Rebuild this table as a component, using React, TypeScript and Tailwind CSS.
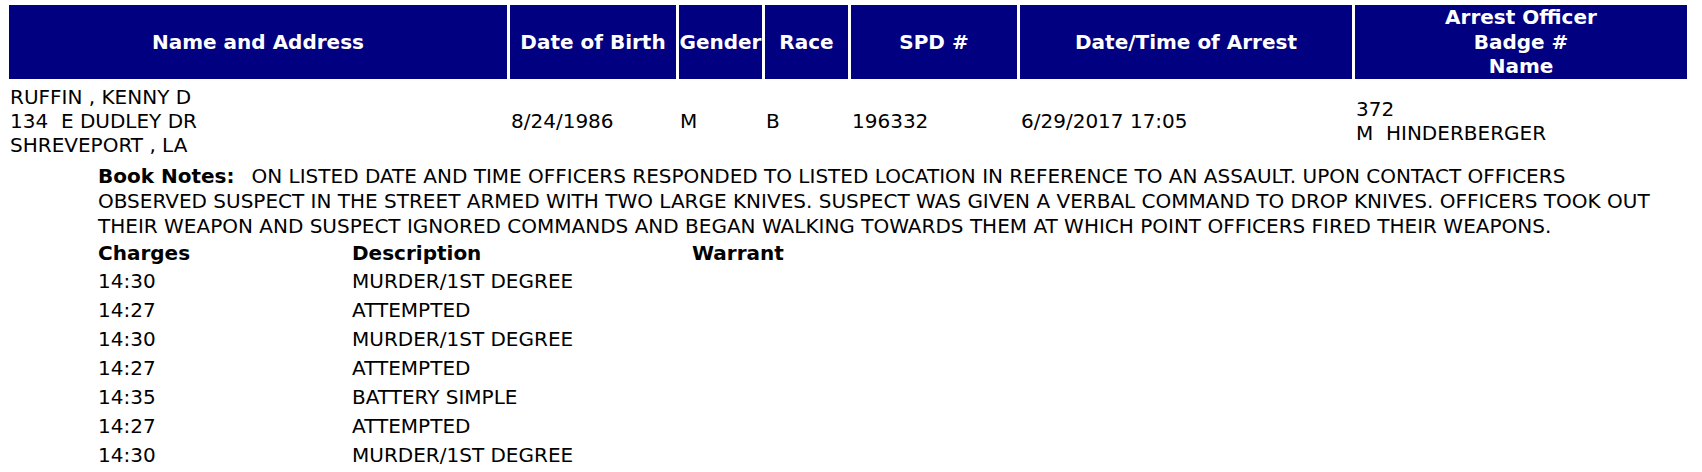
const columns = [
  { label: ['Name and Address'] },
  { label: ['Date of Birth'] },
  { label: ['Gender'] },
  { label: ['Race'] },
  { label: ['SPD #'] },
  { label: ['Date/Time of Arrest'] },
  { label: ['Arrest Officer', 'Badge #', 'Name'] },
]

const charges = [
  { code: '14:30', desc: 'MURDER/1ST DEGREE' },
  { code: '14:27', desc: 'ATTEMPTED' },
  { code: '14:30', desc: 'MURDER/1ST DEGREE' },
  { code: '14:27', desc: 'ATTEMPTED' },
  { code: '14:35', desc: 'BATTERY SIMPLE' },
  { code: '14:27', desc: 'ATTEMPTED' },
  { code: '14:30', desc: 'MURDER/1ST DEGREE' },
]

const notes =
  'ON LISTED DATE AND TIME OFFICERS RESPONDED TO LISTED LOCATION IN REFERENCE TO AN ASSAULT. UPON CONTACT OFFICERS OBSERVED SUSPECT IN THE STREET ARMED WITH TWO LARGE KNIVES. SUSPECT WAS GIVEN A VERBAL COMMAND TO DROP KNIVES. OFFICERS TOOK OUT THEIR WEAPON AND SUSPECT IGNORED COMMANDS AND BEGAN WALKING TOWARDS THEM AT WHICH POINT OFFICERS FIRED THEIR WEAPONS.'

const grid = 'grid grid-cols-[498px_166px_83px_83px_166px_332px_332px] gap-x-[3px]'

export default function App() {
  return (
    <div className="min-h-screen bg-white pl-[9px] pt-[5px] font-['DejaVu_Sans',Verdana,sans-serif] text-[20px] text-black">
      <div className="w-[1678px]">
        {/* header row */}
        <div className={`${grid} h-[74px]`}>
          {columns.map((col) => (
            <div
              key={col.label[0]}
              className="flex flex-col items-center justify-center whitespace-nowrap bg-[#000080] text-center font-bold leading-[24.5px] text-white"
            >
              {col.label.map((line) => (
                <span key={line}>{line}</span>
              ))}
            </div>
          ))}
        </div>

        {/* arrest row */}
        <div className={`${grid} mt-[3px] items-center py-[2.5px] leading-[24px]`}>
          <div className="px-[1px]">
            <div>RUFFIN , KENNY D</div>
            <div className="whitespace-pre">134  E DUDLEY DR</div>
            <div>SHREVEPORT , LA</div>
          </div>
          <div className="px-[1px]">8/24/1986</div>
          <div className="px-[1px]">M</div>
          <div className="px-[1px]">B</div>
          <div className="px-[1px]">196332</div>
          <div className="px-[1px]">6/29/2017 17:05</div>
          <div className="px-[1px]">
            <div>372</div>
            <div className="whitespace-pre">M  HINDERBERGER</div>
          </div>
        </div>

        {/* notes */}
        <p className="ml-[89px] mt-[4.5px] w-[1572px] leading-[25px]">
          <b>Book Notes:</b>
          <span className="inline-block w-[17px]" />
          {notes}
        </p>

        {/* charges */}
        <div className="ml-[89px] leading-[24px]">
          <div className="grid grid-cols-[254px_340px_1fr] py-[2px] font-bold">
            <span>Charges</span>
            <span>Description</span>
            <span>Warrant</span>
          </div>
          {charges.map((c, i) => (
            <div key={i} className="grid grid-cols-[254px_340px_1fr] py-[2.5px]">
              <span>{c.code}</span>
              <span>{c.desc}</span>
              <span></span>
            </div>
          ))}
        </div>
      </div>
    </div>
  )
}
